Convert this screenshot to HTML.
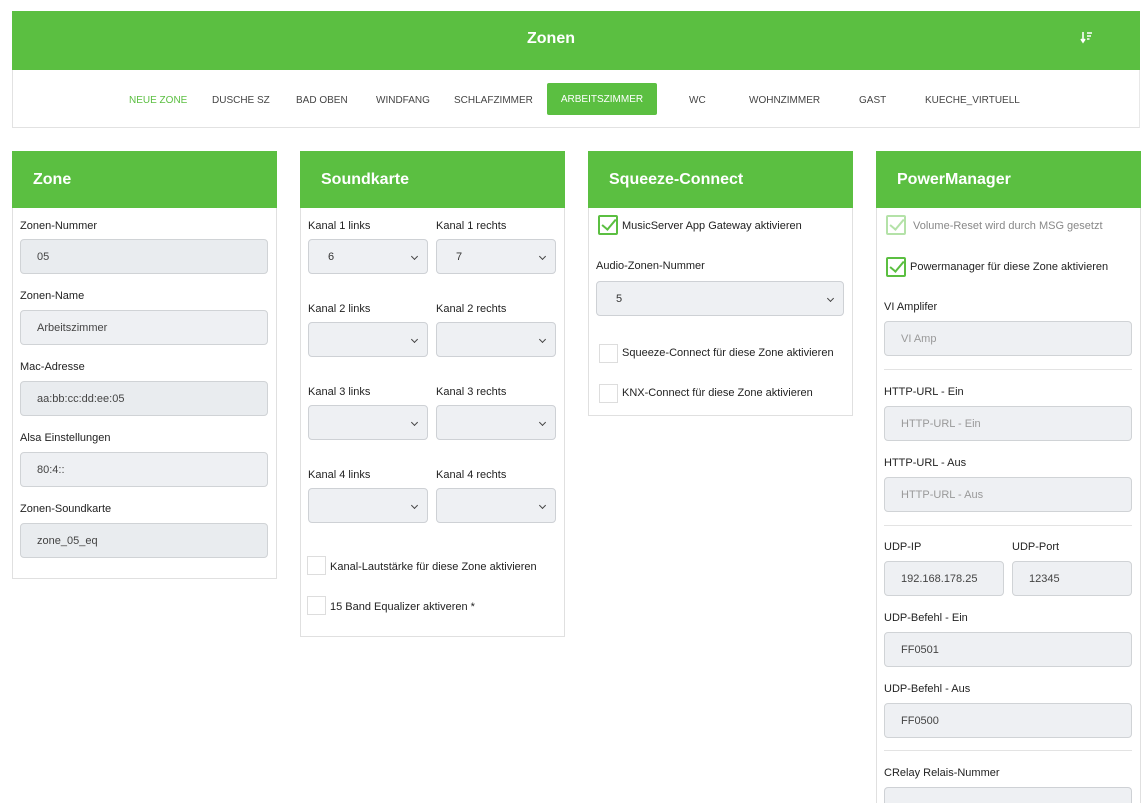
<!DOCTYPE html>
<html style="width:1143px;height:803px;overflow:hidden"><head><meta charset="utf-8"><style>
*{box-sizing:border-box;margin:0;padding:0}
body{width:1143px;height:803px;overflow:hidden;background:#fff;font-family:"Liberation Sans",Arial,sans-serif;font-size:11px;color:#222;position:relative}
.a{position:absolute}
.top{left:12px;top:11px;width:1128px;height:59px;background:#5bbf41;color:#fff;font-weight:bold;font-size:16px;text-align:center;line-height:55px;padding-right:50px}
.nav{left:12px;top:70px;width:1128px;height:58px;border:1px solid #e2e2e2;border-top:none;border-right:1px solid #e8e8e8}
.ni{top:95px;font-size:10px;color:#444;white-space:nowrap}
.card{background:#fff;border:1px solid #e0e0e0;width:265px}
.hd{position:absolute;left:-1px;top:-1px;width:265px;height:57px;background:#5bbf41;color:#fff;font-weight:bold;font-size:16px;line-height:57px;padding-left:21px}
.lb{font-size:11px;color:#222;white-space:nowrap}
.in{height:35px;background:#e9ecef;border:1px solid #d0d3d6;border-radius:4px;padding-left:16px;line-height:35px;font-size:11px;color:#444}
.in.p{color:#999;background:#eef0f3}
.sel{height:35px;background:#eef0f3;border:1px solid #ced1d5;border-radius:4px;padding-left:19px;line-height:35px;font-size:11px;color:#333}
.sel:after{content:"";position:absolute;right:10px;top:14px;width:4px;height:4px;border-right:1.3px solid #444;border-bottom:1.3px solid #444;transform:rotate(45deg)}
.cb{width:19px;height:19px;border:1px solid #ddd;background:#fff}
.ck{width:20px;height:20px;border:2px solid #5bbf41;border-radius:2px;background:#fff}
.ck:after{content:"";position:absolute;left:5px;top:-1px;width:6px;height:12px;border-right:2px solid #5bbf41;border-bottom:2px solid #5bbf41;transform:rotate(40deg)}
.ck.f{opacity:.45}
.hr{height:1px;background:#e3e3e3}
</style></head><body>
<div class="a top">Zonen</div>
<svg class="a" style="left:1080px;top:31px" width="13" height="13" viewBox="0 0 13 13"><path d="M3 1v9M1 8l2 3 2-3" stroke="#fff" stroke-width="1.6" fill="none"/><path d="M7 2h5M7 5h4M7 8h2.5" stroke="#fff" stroke-width="1.6"/></svg>
<div class="a nav"></div>
<div class="a ni" style="left:129px;color:#5bbf41">NEUE ZONE</div>
<div class="a ni" style="left:212px">DUSCHE SZ</div>
<div class="a ni" style="left:296px">BAD OBEN</div>
<div class="a ni" style="left:376px">WINDFANG</div>
<div class="a ni" style="left:454px">SCHLAFZIMMER</div>
<div class="a" style="left:547px;top:83px;width:110px;height:32px;background:#5bbf41;border-radius:2px;color:#fff;font-size:10px;line-height:33px;text-align:center">ARBEITSZIMMER</div>
<div class="a ni" style="left:689px">WC</div>
<div class="a ni" style="left:749px">WOHNZIMMER</div>
<div class="a ni" style="left:859px">GAST</div>
<div class="a ni" style="left:925px">KUECHE_VIRTUELL</div>

<div class="a card" style="left:12px;top:151px;height:428px"><div class="hd">Zone</div></div>
<div class="a lb" style="left:20px;top:220px">Zonen-Nummer</div>
<div class="a in" style="left:20px;top:239px;width:248px">05</div>
<div class="a lb" style="left:20px;top:290px">Zonen-Name</div>
<div class="a in" style="left:20px;top:310px;width:248px;background:#eef0f3">Arbeitszimmer</div>
<div class="a lb" style="left:20px;top:361px">Mac-Adresse</div>
<div class="a in" style="left:20px;top:381px;width:248px">aa:bb:cc:dd:ee:05</div>
<div class="a lb" style="left:20px;top:432px">Alsa Einstellungen</div>
<div class="a in" style="left:20px;top:452px;width:248px;background:#eef0f3">80:4::</div>
<div class="a lb" style="left:20px;top:503px">Zonen-Soundkarte</div>
<div class="a in" style="left:20px;top:523px;width:248px">zone_05_eq</div>

<div class="a card" style="left:300px;top:151px;height:486px"><div class="hd">Soundkarte</div></div>
<div class="a lb" style="left:308px;top:220px">Kanal 1 links</div><div class="a lb" style="left:436px;top:220px">Kanal 1 rechts</div>
<div class="a sel" style="left:308px;top:239px;width:120px">6</div><div class="a sel" style="left:436px;top:239px;width:120px">7</div>
<div class="a lb" style="left:308px;top:303px">Kanal 2 links</div><div class="a lb" style="left:436px;top:303px">Kanal 2 rechts</div>
<div class="a sel" style="left:308px;top:322px;width:120px"></div><div class="a sel" style="left:436px;top:322px;width:120px"></div>
<div class="a lb" style="left:308px;top:386px">Kanal 3 links</div><div class="a lb" style="left:436px;top:386px">Kanal 3 rechts</div>
<div class="a sel" style="left:308px;top:405px;width:120px"></div><div class="a sel" style="left:436px;top:405px;width:120px"></div>
<div class="a lb" style="left:308px;top:469px">Kanal 4 links</div><div class="a lb" style="left:436px;top:469px">Kanal 4 rechts</div>
<div class="a sel" style="left:308px;top:488px;width:120px"></div><div class="a sel" style="left:436px;top:488px;width:120px"></div>
<div class="a cb" style="left:307px;top:556px"></div><div class="a lb" style="left:330px;top:561px">Kanal-Lautstärke für diese Zone aktivieren</div>
<div class="a cb" style="left:307px;top:596px"></div><div class="a lb" style="left:330px;top:601px">15 Band Equalizer aktiveren *</div>

<div class="a card" style="left:588px;top:151px;height:265px"><div class="hd">Squeeze-Connect</div></div>
<div class="a ck" style="left:598px;top:215px"></div><div class="a lb" style="left:622px;top:220px">MusicServer App Gateway aktivieren</div>
<div class="a lb" style="left:596px;top:260px">Audio-Zonen-Nummer</div>
<div class="a sel" style="left:596px;top:281px;width:248px">5</div>
<div class="a cb" style="left:599px;top:344px"></div><div class="a lb" style="left:622px;top:347px">Squeeze-Connect für diese Zone aktivieren</div>
<div class="a cb" style="left:599px;top:384px"></div><div class="a lb" style="left:622px;top:387px">KNX-Connect für diese Zone aktivieren</div>

<div class="a card" style="left:876px;top:151px;height:652px;border-bottom:none"><div class="hd">PowerManager</div></div>
<div class="a ck f" style="left:886px;top:215px"></div><div class="a lb" style="left:913px;top:220px;color:#888">Volume-Reset wird durch MSG gesetzt</div>
<div class="a ck" style="left:886px;top:257px"></div><div class="a lb" style="left:910px;top:261px">Powermanager für diese Zone aktivieren</div>
<div class="a lb" style="left:884px;top:301px">VI Amplifer</div>
<div class="a in p" style="left:884px;top:321px;width:248px">VI Amp</div>
<div class="a hr" style="left:884px;top:369px;width:248px"></div>
<div class="a lb" style="left:884px;top:386px">HTTP-URL - Ein</div>
<div class="a in p" style="left:884px;top:406px;width:248px">HTTP-URL - Ein</div>
<div class="a lb" style="left:884px;top:457px">HTTP-URL - Aus</div>
<div class="a in p" style="left:884px;top:477px;width:248px">HTTP-URL - Aus</div>
<div class="a hr" style="left:884px;top:525px;width:248px"></div>
<div class="a lb" style="left:884px;top:541px">UDP-IP</div><div class="a lb" style="left:1012px;top:541px">UDP-Port</div>
<div class="a in" style="left:884px;top:561px;width:120px;background:#eef0f3">192.168.178.25</div>
<div class="a in" style="left:1012px;top:561px;width:120px;background:#eef0f3">12345</div>
<div class="a lb" style="left:884px;top:612px">UDP-Befehl - Ein</div>
<div class="a in" style="left:884px;top:632px;width:248px;background:#eef0f3">FF0501</div>
<div class="a lb" style="left:884px;top:683px">UDP-Befehl - Aus</div>
<div class="a in" style="left:884px;top:703px;width:248px;background:#eef0f3">FF0500</div>
<div class="a hr" style="left:884px;top:750px;width:248px"></div>
<div class="a lb" style="left:884px;top:767px">CRelay Relais-Nummer</div>
<div class="a" style="left:884px;top:787px;width:248px;height:16px;background:#eef0f3;border:1px solid #ced1d5;border-bottom:none;border-radius:4px 4px 0 0"></div>
</body></html>
